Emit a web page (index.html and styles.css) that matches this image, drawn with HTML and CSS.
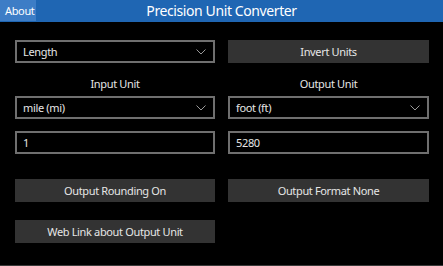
FILE: index.html
```html
<!DOCTYPE html>
<html lang="en">
<head>
	<meta charset="UTF-8">
	<title>Precision Unit Converter</title>
	<link rel="stylesheet" href="styles.css">
</head>
<body>
	<header class="titlebar">
		<div class="about">About</div>
		<h1>Precision Unit Converter</h1>
	</header>
	<section class="panel">
		<div class="row first">
			<div class="combo"><span>Length</span><svg class="chev" width="10" height="6" viewBox="0 0 10 6"><path d="M0.5 0.5 L5 5 L9.5 0.5" fill="none" stroke="#9a9a9a" stroke-width="1"/></svg></div>
			<div class="btn">Invert Units</div>
		</div>
		<div class="row labels">
			<div class="label">Input Unit</div>
			<div class="label">Output Unit</div>
		</div>
		<div class="row">
			<div class="combo"><span>mile (mi)</span><svg class="chev" width="10" height="6" viewBox="0 0 10 6"><path d="M0.5 0.5 L5 5 L9.5 0.5" fill="none" stroke="#9a9a9a" stroke-width="1"/></svg></div>
			<div class="combo"><span>foot (ft)</span><svg class="chev" width="10" height="6" viewBox="0 0 10 6"><path d="M0.5 0.5 L5 5 L9.5 0.5" fill="none" stroke="#9a9a9a" stroke-width="1"/></svg></div>
		</div>
		<div class="row inputs">
			<div class="textbox">1</div>
			<div class="textbox">5280</div>
		</div>
		<div class="row options">
			<div class="btn">Output Rounding On</div>
			<div class="btn">Output Format None</div>
		</div>
		<div class="row links">
			<div class="btn">Web Link about Output Unit</div>
		</div>
	</section>
</body>
</html>
```
FILE: styles.css
```css
* {
	margin: 0;
	padding: 0;
	box-sizing: border-box;
}
html, body {
	width: 443px;
	height: 266px;
	overflow: hidden;
}
body {
	background-color: #000;
	color: #e6e6e6;
	font-family: "Noto Sans", sans-serif;
	font-size: 11px;
	letter-spacing: -0.35px;
	line-height: 16px;
	border-bottom: 1px solid #3a3a3a;
}
.titlebar {
	height: 22px;
	background-color: #1f66b3;
	display: flex;
	align-items: flex-start;
}
.about {
	width: 36px;
	height: 21px;
	background-color: #3d7dc6;
	color: #fff;
	font-size: 11px;
	line-height: 22px;
	padding-left: 5px;
}
.titlebar h1 {
	flex: 1;
	text-align: center;
	font-weight: normal;
	font-size: 14px;
	letter-spacing: -0.4px;
	color: #fff;
	margin-right: 36px;
	line-height: 22px;
}
.panel {
	padding-left: 15px;
}
.row {
	display: flex;
	gap: 13px;
	height: 23px;
}
.row > div {
	width: 200px;
}
.row > div + div {
	width: 201px;
}
.row.first {
	margin-top: 18px;
}
.row.labels {
	height: 33px;
	align-items: flex-end;
	padding-bottom: 4px;
}
.row.inputs {
	margin-top: 12px;
}
.row.options {
	margin-top: 25px;
}
.row.links {
	margin-top: 18px;
}
.label {
	text-align: center;
}
.combo, .textbox {
	border: 2px solid #6f6f6f;
	display: flex;
	align-items: center;
	padding-left: 6px;
	padding-right: 7px;
}
.combo span {
	flex: 1;
}
.chev {
	display: block;
}
.btn {
	background-color: #333;
	display: flex;
	align-items: center;
	justify-content: center;
}
```
